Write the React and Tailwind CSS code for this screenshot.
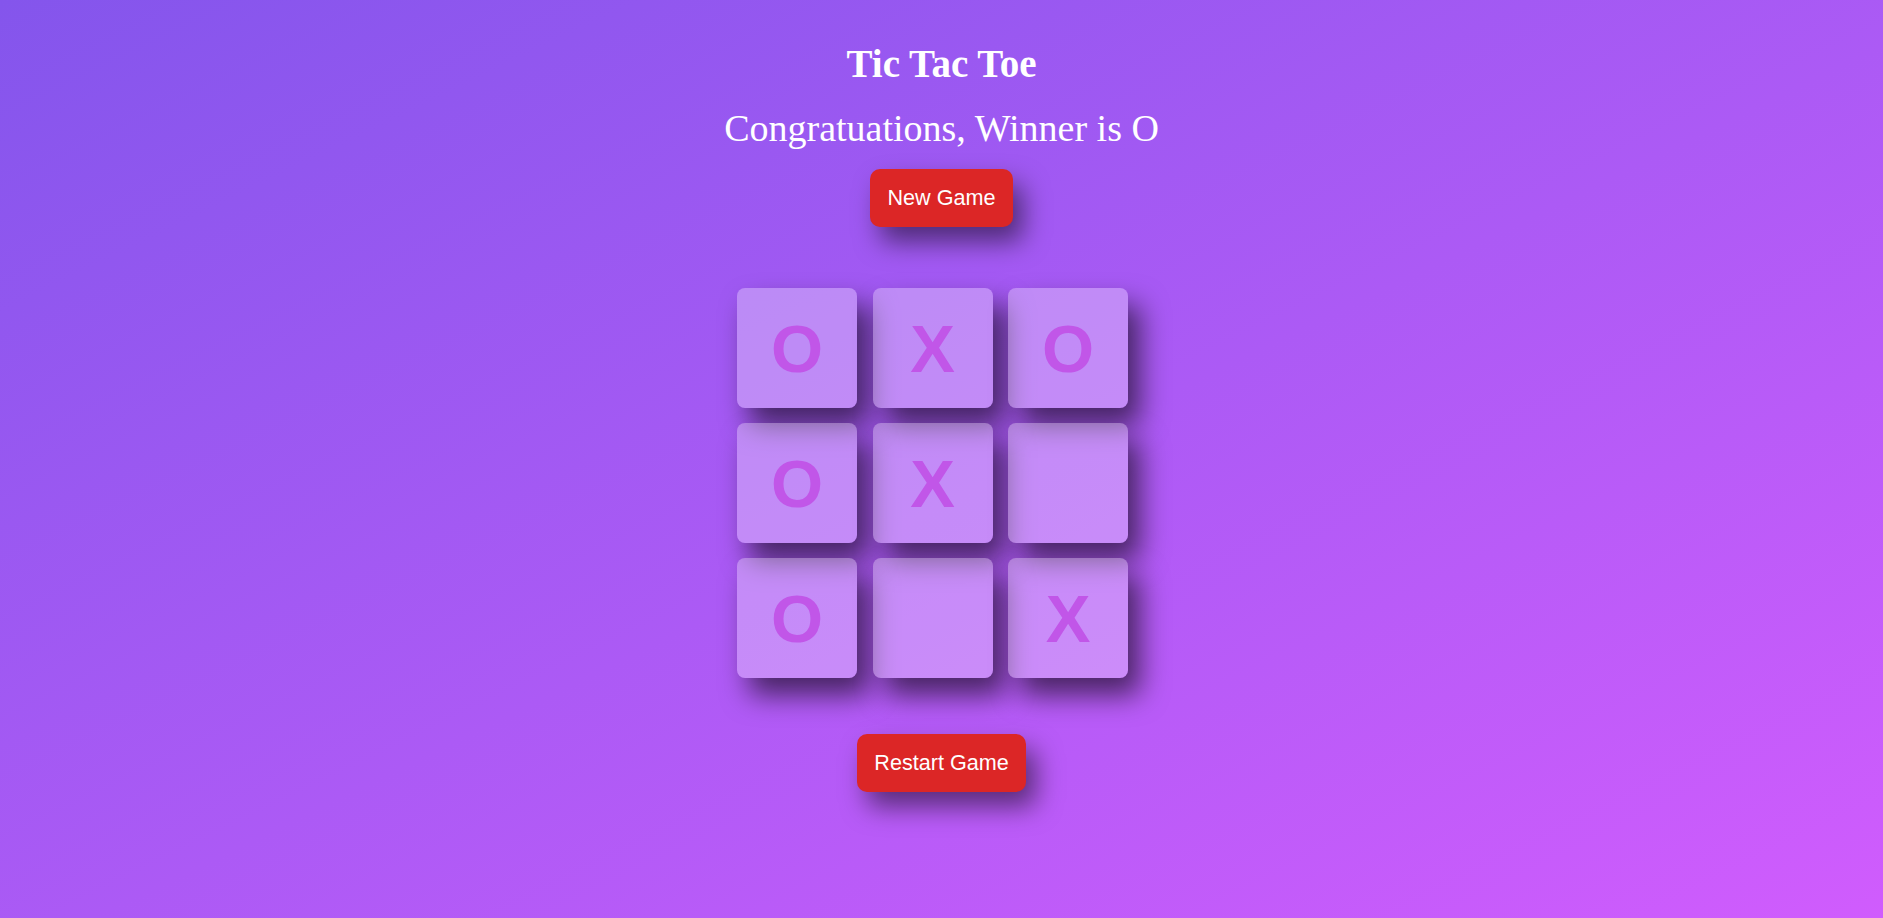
export default function App() {
  const board = ["O", "X", "O", "O", "X", "", "O", "", "X"];
  return (
    <div className="min-h-screen w-full bg-linear-to-br from-[#8455ec] to-[#d05cfd] flex flex-col items-center">
      <h1 className="mt-[41px] text-[39px] leading-[46px] font-bold text-white font-['Liberation_Serif',serif]">
        Tic Tac Toe
      </h1>
      <h2 className="mt-[19px] text-[38px] leading-[44px] font-normal text-white font-['Liberation_Serif',serif]">
        Congratuations, Winner is O
      </h2>
      <button className="mt-[19px] h-[58px] px-[17px] rounded-[10px] bg-[#dc2626] text-white text-[21.6px] font-['Liberation_Sans',Arial,sans-serif] shadow-[10px_15px_26px_rgba(0,0,0,0.5)]">
        New Game
      </button>
      <div className="mt-[61px] w-[409px]">
        <div className="grid grid-cols-[120px_120px_120px] gap-x-[15.5px] gap-y-[15px]">
          {board.map((v, i) => (
            <div
              key={i}
              className="w-[120px] h-[120px] rounded-[8px] bg-[rgba(255,255,255,0.3)] shadow-[12px_17px_28px_rgba(0,0,0,0.6)] flex items-center justify-center text-[67px] font-bold text-[#c156e8] font-['Liberation_Sans',Arial,sans-serif] leading-none"
            >
              {v}
            </div>
          ))}
        </div>
      </div>
      <button className="mt-[56px] h-[58px] px-[17px] rounded-[10px] bg-[#dc2626] text-white text-[21.6px] font-['Liberation_Sans',Arial,sans-serif] shadow-[10px_15px_26px_rgba(0,0,0,0.5)]">
        Restart Game
      </button>
    </div>
  );
}
